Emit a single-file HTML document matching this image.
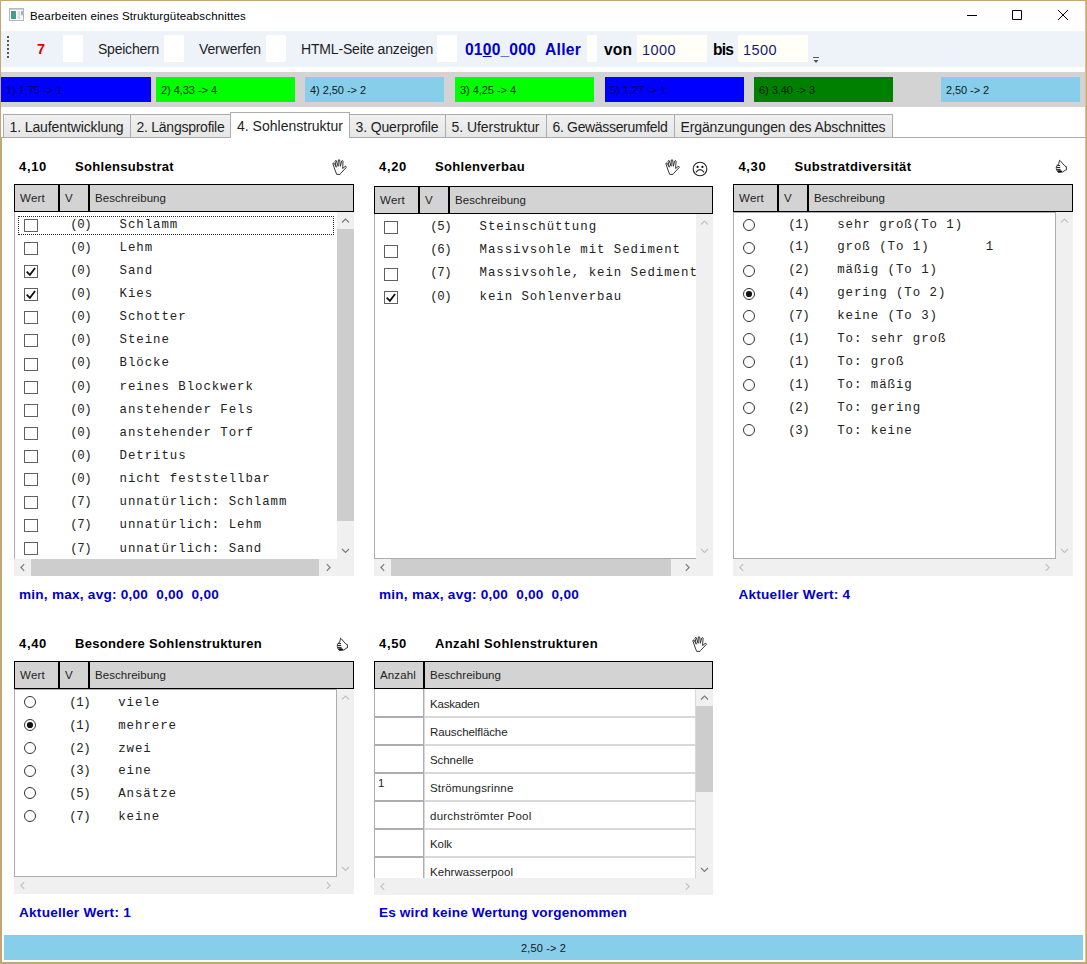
<!DOCTYPE html>
<html lang="de"><head><meta charset="utf-8"><title>Bearbeiten eines Strukturgüteabschnittes</title>
<style>
html,body{margin:0;padding:0;}
body{width:1087px;height:964px;overflow:hidden;background:#fff;position:relative;font-family:"Liberation Sans", sans-serif;}
.a{position:absolute;box-sizing:border-box;}
.t{position:absolute;white-space:pre;line-height:20px;font-family:"Liberation Sans", sans-serif;color:#000;}
.b{font-weight:bold;}
.m{font-family:"Liberation Mono", monospace;}
.ms{letter-spacing:0.96px;}
.mv{letter-spacing:-0.4px;}
svg{position:absolute;overflow:visible;}
</style></head>
<body>
<div class="a" style="left:0px;top:0px;width:1087px;height:1px;background:#C4A674;"></div>
<div class="a" style="left:0px;top:0px;width:1px;height:964px;background:#C4A674;"></div>
<div class="a" style="left:1px;top:138px;width:1px;height:824px;background:#C4A674;"></div>
<div class="a" style="left:1085px;top:0px;width:2px;height:964px;background:#CCA568;"></div>
<div class="a" style="left:1085px;top:1px;width:1px;height:961px;background:#DCC091;"></div>
<div class="a" style="left:0px;top:962px;width:1087px;height:2px;background:#C4A674;"></div>
<svg style="left:9px;top:8px" width="16" height="14" viewBox="0 0 16 14"><defs><linearGradient id="ig" x1="0" y1="0" x2="1" y2="1"><stop offset="0" stop-color="#5C7FA8"/><stop offset="0.55" stop-color="#46A088"/><stop offset="1" stop-color="#3E9A80"/></linearGradient></defs><rect x="0.5" y="0.5" width="14" height="12" fill="#F7F9FA" stroke="#B3B8C2"/><rect x="1" y="1" width="13" height="1" fill="#CDD1D8"/><rect x="2" y="3" width="5" height="8" fill="url(#ig)"/><rect x="8.6" y="3" width="2.6" height="8" fill="#DEDCDC"/><rect x="12" y="3" width="2" height="4.4" fill="#9DBDB4"/></svg>
<span id="t1" class="t" style="left:30px;top:5.52px;font-size:11.5px;letter-spacing:0.142px;">Bearbeiten eines Strukturgüteabschnittes</span>
<svg style="left:960px;top:5px" width="120" height="22" viewBox="0 0 120 22"><path d="M7 10.5H17 M52.5 5.5H61.5V14.5H52.5Z M98 5L108 15 M108 5L98 15" fill="none" stroke="#000" stroke-width="1"/></svg>
<div class="a" style="left:1px;top:31px;width:1084px;height:36px;background:#EEF3FA;"></div>
<div class="a" style="left:7px;top:36px;width:2px;height:2px;background:#555;"></div>
<div class="a" style="left:7px;top:40px;width:2px;height:2px;background:#555;"></div>
<div class="a" style="left:7px;top:44px;width:2px;height:2px;background:#555;"></div>
<div class="a" style="left:7px;top:48px;width:2px;height:2px;background:#555;"></div>
<div class="a" style="left:7px;top:52px;width:2px;height:2px;background:#555;"></div>
<div class="a" style="left:7px;top:56px;width:2px;height:2px;background:#555;"></div>
<span id="t2" class="t b" style="left:37px;top:39.48px;font-size:14.5px;color:#E00000;letter-spacing:0.922px;">7</span>
<div class="a" style="left:63px;top:35px;width:20px;height:27px;background:#fff;"></div>
<div class="a" style="left:164px;top:35px;width:20px;height:27px;background:#fff;"></div>
<div class="a" style="left:266px;top:35px;width:20px;height:27px;background:#fff;"></div>
<div class="a" style="left:437px;top:35px;width:20px;height:27px;background:#fff;"></div>
<div class="a" style="left:587px;top:35px;width:10px;height:27px;background:#fff;"></div>
<span id="t3" class="t" style="left:98px;top:38.75px;font-size:14px;color:#1E1E1E;letter-spacing:-0.227px;">Speichern</span>
<span id="t4" class="t" style="left:199px;top:38.75px;font-size:14px;color:#1E1E1E;letter-spacing:-0.116px;">Verwerfen</span>
<span id="t5" class="t" style="left:301px;top:38.75px;font-size:14px;color:#1E1E1E;letter-spacing:-0.179px;">HTML-Seite anzeigen</span>
<span id="t6" class="t b" style="left:465px;top:39.99px;font-size:15.6px;color:#0000CD;letter-spacing:0.197px;">01<u>0</u>0_000</span>
<span id="t7" class="t b" style="left:545px;top:39.99px;font-size:15.6px;color:#0000CD;letter-spacing:0.266px;">Aller</span>
<span id="t8" class="t b" style="left:604px;top:39.99px;font-size:15.6px;letter-spacing:0.089px;">von</span>
<div class="a" style="left:637px;top:35px;width:70px;height:27px;background:#FFFFF8;"></div>
<span id="t9" class="t" style="left:642px;top:39.98px;font-size:14.5px;color:#191970;letter-spacing:0.434px;">1000</span>
<span id="t10" class="t b" style="left:713px;top:39.99px;font-size:15.6px;letter-spacing:-0.844px;">bis</span>
<div class="a" style="left:738px;top:35px;width:70px;height:27px;background:#FFFFF8;"></div>
<span id="t11" class="t" style="left:743px;top:39.98px;font-size:14.5px;color:#191970;letter-spacing:0.434px;">1500</span>
<svg style="left:812px;top:56px" width="8" height="8" viewBox="0 0 8 8"><path d="M1 1.5H7" stroke="#555" stroke-width="1"/><path d="M1.5 4H6.5L4 7Z" fill="#555"/></svg>
<div class="a" style="left:1px;top:72px;width:1084px;height:35px;background:#D3D3D3;"></div>
<div class="a" style="left:1px;top:77px;width:150px;height:25px;background:#0000FF;"></div>
<span id="t12" class="t" style="left:6px;top:80.19px;font-size:11px;color:#000058;letter-spacing:-0.048px;">1) 1,75 -> 1</span>
<div class="a" style="left:156px;top:77px;width:139px;height:25px;background:#00FF00;"></div>
<span id="t13" class="t" style="left:161px;top:80.19px;font-size:11px;color:#002A00;letter-spacing:-0.048px;">2) 4,33 -> 4</span>
<div class="a" style="left:305px;top:77px;width:139px;height:25px;background:#87CEEB;"></div>
<span id="t14" class="t" style="left:310px;top:80.19px;font-size:11px;color:#10181C;letter-spacing:-0.048px;">4) 2,50 -> 2</span>
<div class="a" style="left:455px;top:77px;width:139px;height:25px;background:#00FF00;"></div>
<span id="t15" class="t" style="left:460px;top:80.19px;font-size:11px;color:#002A00;letter-spacing:-0.048px;">3) 4,25 -> 4</span>
<div class="a" style="left:605px;top:77px;width:139px;height:25px;background:#0000FF;"></div>
<span id="t16" class="t" style="left:610px;top:80.19px;font-size:11px;color:#000058;letter-spacing:-0.048px;">5) 1,27 -> 1</span>
<div class="a" style="left:754px;top:77px;width:139px;height:25px;background:#008000;"></div>
<span id="t17" class="t" style="left:759px;top:80.19px;font-size:11px;color:#001800;letter-spacing:-0.048px;">6) 3,40 -> 3</span>
<div class="a" style="left:941px;top:77px;width:139px;height:25px;background:#87CEEB;"></div>
<span id="t18" class="t" style="left:946px;top:80.19px;font-size:11px;color:#10181C;letter-spacing:-0.082px;">2,50 -> 2</span>
<div class="a" style="left:1px;top:137px;width:1084px;height:1px;background:#ACACAC;"></div>
<div class="a" style="left:3px;top:114px;width:128px;height:24px;background:linear-gradient(#F1F1F1,#E6E6E6);border:1px solid #ACACAC;"></div>
<span id="t19" class="t" style="left:9.5px;top:116.65px;font-size:14px;color:#1E1E1E;letter-spacing:-0.109px;">1. Laufentwicklung</span>
<div class="a" style="left:130px;top:114px;width:102px;height:24px;background:linear-gradient(#F1F1F1,#E6E6E6);border:1px solid #ACACAC;"></div>
<span id="t20" class="t" style="left:136.5px;top:116.65px;font-size:14px;color:#1E1E1E;letter-spacing:-0.256px;">2. Längsprofile</span>
<div class="a" style="left:349px;top:114px;width:97px;height:24px;background:linear-gradient(#F1F1F1,#E6E6E6);border:1px solid #ACACAC;"></div>
<span id="t21" class="t" style="left:355.5px;top:116.65px;font-size:14px;color:#1E1E1E;letter-spacing:-0.131px;">3. Querprofile</span>
<div class="a" style="left:445px;top:114px;width:102px;height:24px;background:linear-gradient(#F1F1F1,#E6E6E6);border:1px solid #ACACAC;"></div>
<span id="t22" class="t" style="left:451.5px;top:116.65px;font-size:14px;color:#1E1E1E;letter-spacing:-0.047px;">5. Uferstruktur</span>
<div class="a" style="left:546px;top:114px;width:129px;height:24px;background:linear-gradient(#F1F1F1,#E6E6E6);border:1px solid #ACACAC;"></div>
<span id="t23" class="t" style="left:552.5px;top:116.65px;font-size:14px;color:#1E1E1E;letter-spacing:-0.330px;">6. Gewässerumfeld</span>
<div class="a" style="left:674px;top:114px;width:219px;height:24px;background:linear-gradient(#F1F1F1,#E6E6E6);border:1px solid #ACACAC;"></div>
<span id="t24" class="t" style="left:680.5px;top:116.65px;font-size:14px;color:#1E1E1E;letter-spacing:-0.120px;">Ergänzungungen des Abschnittes</span>
<div class="a" style="left:230px;top:112px;width:120px;height:26px;background:#fff;border:1px solid #ACACAC;border-bottom:none;"></div>
<span id="t25" class="t" style="left:237px;top:115.65px;font-size:14px;color:#1E1E1E;letter-spacing:0.009px;">4. Sohlenstruktur</span>
<span id="t26" class="t b" style="left:19px;top:157.00px;font-size:13px;letter-spacing:0.672px;">4,10</span>
<span id="t27" class="t b" style="left:75px;top:157.00px;font-size:13px;letter-spacing:0.312px;">Sohlensubstrat</span>
<svg style="left:332px;top:159px" width="15" height="16" viewBox="0 0 15 16"><path d="M4.7 15.4 L3.0 11.0 L0.9 4.8 Q0.9 3.5 2.0 4.1 L4.3 8.2 L3.0 2.3 Q3.3 1.1 4.3 1.7 L6.1 7.3 L6.3 1.0 Q7.0 0.0 7.7 1.0 L8.3 7.3 L9.8 1.9 Q10.6 1.0 11.1 2.1 L10.6 9.5 L13.2 7.4 Q14.5 7.2 14.2 8.5 L8.5 14.6 L8.0 15.4 Z" fill="#fff" stroke="#222" stroke-width="0.9" stroke-linejoin="round"/></svg>
<div class="a" style="left:14px;top:184px;width:45px;height:28px;background:#D3D3D3;border:1px solid #000;"></div>
<span id="t28" class="t" style="left:20px;top:188.02px;font-size:11.5px;color:#1E1E1E;letter-spacing:0.230px;">Wert</span>
<div class="a" style="left:59px;top:184px;width:30px;height:28px;background:#D3D3D3;border:1px solid #000;"></div>
<span id="t29" class="t" style="left:65px;top:188.02px;font-size:11.5px;color:#1E1E1E;letter-spacing:0.328px;">V</span>
<div class="a" style="left:89px;top:184px;width:265px;height:28px;background:#D3D3D3;border:1px solid #000;"></div>
<span id="t30" class="t" style="left:95px;top:188.02px;font-size:11.5px;color:#1E1E1E;letter-spacing:0.056px;">Beschreibung</span>
<div class="a" style="left:14px;top:212px;width:1px;height:347px;background:#ABADB3;"></div>
<div class="a" style="left:337px;top:212px;width:17px;height:347px;background:#F0F0F0;"></div>
<svg style="left:337px;top:212px" width="17" height="17" viewBox="0 0 17 17"><path d="M5 10.5L8.5 7L12 10.5" fill="none" stroke="#7A7A7A" stroke-width="1.15"/></svg>
<svg style="left:337px;top:542px" width="17" height="17" viewBox="0 0 17 17"><path d="M5 7L8.5 10.5L12 7" fill="none" stroke="#7A7A7A" stroke-width="1.15"/></svg>
<div class="a" style="left:337px;top:229px;width:17px;height:292px;background:#CDCDCD;"></div>
<div class="a" style="left:14px;top:559px;width:323px;height:17px;background:#F0F0F0;"></div>
<svg style="left:14px;top:559px" width="17" height="17" viewBox="0 0 17 17"><path d="M10.2 5.2L6.9 8.5L10.2 11.8" fill="none" stroke="#7A7A7A" stroke-width="1.15"/></svg>
<svg style="left:320px;top:559px" width="17" height="17" viewBox="0 0 17 17"><path d="M6.8 5.2L10.1 8.5L6.8 11.8" fill="none" stroke="#7A7A7A" stroke-width="1.15"/></svg>
<div class="a" style="left:31px;top:559px;width:288px;height:17px;background:#CDCDCD;"></div>
<div class="a" style="left:337px;top:559px;width:17px;height:17px;background:#F0F0F0;"></div>
<div class="a" style="left:18px;top:216px;width:316px;height:19px;border:1px dotted #222;"></div>
<div class="a" style="left:24px;top:219px;width:14px;height:13px;background:#fff;border:1px solid #606060;"></div>
<span id="t31" class="t m mv" style="left:70.3px;top:214.50px;font-size:12.4px;color:#222;">(0)</span>
<span id="t32" class="t m ms" style="left:119.5px;top:214.50px;font-size:12.4px;color:#222;">Schlamm</span>
<div class="a" style="left:24px;top:242px;width:14px;height:13px;background:#fff;border:1px solid #606060;"></div>
<span id="t33" class="t m mv" style="left:70.3px;top:237.65px;font-size:12.4px;color:#222;">(0)</span>
<span id="t34" class="t m ms" style="left:119.5px;top:237.65px;font-size:12.4px;color:#222;">Lehm</span>
<div class="a" style="left:24px;top:265px;width:14px;height:13px;background:#fff;border:1px solid #606060;"></div>
<svg style="left:24px;top:265px" width="14" height="13" viewBox="0 0 14 13"><path d="M2.7 6.6L5.9 9.9L11.1 3.0" fill="none" stroke="#111" stroke-width="1.8"/></svg>
<span id="t35" class="t m mv" style="left:70.3px;top:260.80px;font-size:12.4px;color:#222;">(0)</span>
<span id="t36" class="t m ms" style="left:119.5px;top:260.80px;font-size:12.4px;color:#222;">Sand</span>
<div class="a" style="left:24px;top:288px;width:14px;height:13px;background:#fff;border:1px solid #606060;"></div>
<svg style="left:24px;top:288px" width="14" height="13" viewBox="0 0 14 13"><path d="M2.7 6.6L5.9 9.9L11.1 3.0" fill="none" stroke="#111" stroke-width="1.8"/></svg>
<span id="t37" class="t m mv" style="left:70.3px;top:283.95px;font-size:12.4px;color:#222;">(0)</span>
<span id="t38" class="t m ms" style="left:119.5px;top:283.95px;font-size:12.4px;color:#222;">Kies</span>
<div class="a" style="left:24px;top:311px;width:14px;height:13px;background:#fff;border:1px solid #606060;"></div>
<span id="t39" class="t m mv" style="left:70.3px;top:307.10px;font-size:12.4px;color:#222;">(0)</span>
<span id="t40" class="t m ms" style="left:119.5px;top:307.10px;font-size:12.4px;color:#222;">Schotter</span>
<div class="a" style="left:24px;top:334px;width:14px;height:13px;background:#fff;border:1px solid #606060;"></div>
<span id="t41" class="t m mv" style="left:70.3px;top:330.25px;font-size:12.4px;color:#222;">(0)</span>
<span id="t42" class="t m ms" style="left:119.5px;top:330.25px;font-size:12.4px;color:#222;">Steine</span>
<div class="a" style="left:24px;top:358px;width:14px;height:13px;background:#fff;border:1px solid #606060;"></div>
<span id="t43" class="t m mv" style="left:70.3px;top:353.40px;font-size:12.4px;color:#222;">(0)</span>
<span id="t44" class="t m ms" style="left:119.5px;top:353.40px;font-size:12.4px;color:#222;">Blöcke</span>
<div class="a" style="left:24px;top:381px;width:14px;height:13px;background:#fff;border:1px solid #606060;"></div>
<span id="t45" class="t m mv" style="left:70.3px;top:376.55px;font-size:12.4px;color:#222;">(0)</span>
<span id="t46" class="t m ms" style="left:119.5px;top:376.55px;font-size:12.4px;color:#222;">reines Blockwerk</span>
<div class="a" style="left:24px;top:404px;width:14px;height:13px;background:#fff;border:1px solid #606060;"></div>
<span id="t47" class="t m mv" style="left:70.3px;top:399.70px;font-size:12.4px;color:#222;">(0)</span>
<span id="t48" class="t m ms" style="left:119.5px;top:399.70px;font-size:12.4px;color:#222;">anstehender Fels</span>
<div class="a" style="left:24px;top:427px;width:14px;height:13px;background:#fff;border:1px solid #606060;"></div>
<span id="t49" class="t m mv" style="left:70.3px;top:422.85px;font-size:12.4px;color:#222;">(0)</span>
<span id="t50" class="t m ms" style="left:119.5px;top:422.85px;font-size:12.4px;color:#222;">anstehender Torf</span>
<div class="a" style="left:24px;top:450px;width:14px;height:13px;background:#fff;border:1px solid #606060;"></div>
<span id="t51" class="t m mv" style="left:70.3px;top:446.00px;font-size:12.4px;color:#222;">(0)</span>
<span id="t52" class="t m ms" style="left:119.5px;top:446.00px;font-size:12.4px;color:#222;">Detritus</span>
<div class="a" style="left:24px;top:473px;width:14px;height:13px;background:#fff;border:1px solid #606060;"></div>
<span id="t53" class="t m mv" style="left:70.3px;top:469.15px;font-size:12.4px;color:#222;">(0)</span>
<span id="t54" class="t m ms" style="left:119.5px;top:469.15px;font-size:12.4px;color:#222;">nicht feststellbar</span>
<div class="a" style="left:24px;top:496px;width:14px;height:13px;background:#fff;border:1px solid #606060;"></div>
<span id="t55" class="t m mv" style="left:70.3px;top:492.30px;font-size:12.4px;color:#222;">(7)</span>
<span id="t56" class="t m ms" style="left:119.5px;top:492.30px;font-size:12.4px;color:#222;">unnatürlich: Schlamm</span>
<div class="a" style="left:24px;top:519px;width:14px;height:13px;background:#fff;border:1px solid #606060;"></div>
<span id="t57" class="t m mv" style="left:70.3px;top:515.45px;font-size:12.4px;color:#222;">(7)</span>
<span id="t58" class="t m ms" style="left:119.5px;top:515.45px;font-size:12.4px;color:#222;">unnatürlich: Lehm</span>
<div class="a" style="left:24px;top:542px;width:14px;height:13px;background:#fff;border:1px solid #606060;"></div>
<span id="t59" class="t m mv" style="left:70.3px;top:538.60px;font-size:12.4px;color:#222;">(7)</span>
<span id="t60" class="t m ms" style="left:119.5px;top:538.60px;font-size:12.4px;color:#222;">unnatürlich: Sand</span>
<span id="t61" class="t b" style="left:19px;top:584.69px;font-size:13.6px;color:#0000CD;letter-spacing:0.235px;">min, max, avg: 0,00  0,00  0,00</span>
<span id="t62" class="t b" style="left:379px;top:157.00px;font-size:13px;letter-spacing:0.672px;">4,20</span>
<span id="t63" class="t b" style="left:435px;top:157.00px;font-size:13px;letter-spacing:0.336px;">Sohlenverbau</span>
<svg style="left:665px;top:159px" width="15" height="16" viewBox="0 0 15 16"><path d="M4.7 15.4 L3.0 11.0 L0.9 4.8 Q0.9 3.5 2.0 4.1 L4.3 8.2 L3.0 2.3 Q3.3 1.1 4.3 1.7 L6.1 7.3 L6.3 1.0 Q7.0 0.0 7.7 1.0 L8.3 7.3 L9.8 1.9 Q10.6 1.0 11.1 2.1 L10.6 9.5 L13.2 7.4 Q14.5 7.2 14.2 8.5 L8.5 14.6 L8.0 15.4 Z" fill="#fff" stroke="#222" stroke-width="0.9" stroke-linejoin="round"/></svg>
<svg style="left:692px;top:161px" width="16" height="16" viewBox="0 0 16 16"><circle cx="8" cy="8" r="6.8" fill="#fff" stroke="#222" stroke-width="1.1"/><circle cx="5.6" cy="5.9" r="1.15" fill="#111"/><circle cx="10.4" cy="5.9" r="1.15" fill="#111"/><path d="M3.9 11.3Q8 5.9 12.1 11.3" fill="none" stroke="#222" stroke-width="1.1"/></svg>
<div class="a" style="left:374px;top:186px;width:45px;height:28px;background:#D3D3D3;border:1px solid #000;"></div>
<span id="t64" class="t" style="left:380px;top:190.02px;font-size:11.5px;color:#1E1E1E;letter-spacing:0.230px;">Wert</span>
<div class="a" style="left:419px;top:186px;width:30px;height:28px;background:#D3D3D3;border:1px solid #000;"></div>
<span id="t65" class="t" style="left:425px;top:190.02px;font-size:11.5px;color:#1E1E1E;letter-spacing:0.328px;">V</span>
<div class="a" style="left:449px;top:186px;width:264px;height:28px;background:#D3D3D3;border:1px solid #000;"></div>
<span id="t66" class="t" style="left:455px;top:190.02px;font-size:11.5px;color:#1E1E1E;letter-spacing:0.056px;">Beschreibung</span>
<div class="a" style="left:374px;top:214px;width:1px;height:345px;background:#ABADB3;"></div>
<div class="a" style="left:374px;top:558px;width:322px;height:1px;background:#ABADB3;"></div>
<div class="a" style="left:696px;top:214px;width:17px;height:345px;background:#F0F0F0;"></div>
<svg style="left:696px;top:214px" width="17" height="17" viewBox="0 0 17 17"><path d="M5 10.5L8.5 7L12 10.5" fill="none" stroke="#C2C2C2" stroke-width="1.15"/></svg>
<svg style="left:696px;top:542px" width="17" height="17" viewBox="0 0 17 17"><path d="M5 7L8.5 10.5L12 7" fill="none" stroke="#C2C2C2" stroke-width="1.15"/></svg>
<div class="a" style="left:374px;top:559px;width:322px;height:17px;background:#F0F0F0;"></div>
<svg style="left:374px;top:559px" width="17" height="17" viewBox="0 0 17 17"><path d="M10.2 5.2L6.9 8.5L10.2 11.8" fill="none" stroke="#7A7A7A" stroke-width="1.15"/></svg>
<svg style="left:679px;top:559px" width="17" height="17" viewBox="0 0 17 17"><path d="M6.8 5.2L10.1 8.5L6.8 11.8" fill="none" stroke="#7A7A7A" stroke-width="1.15"/></svg>
<div class="a" style="left:391px;top:559px;width:280px;height:17px;background:#CDCDCD;"></div>
<div class="a" style="left:696px;top:559px;width:17px;height:17px;background:#F0F0F0;"></div>
<div class="a" style="left:384px;top:221px;width:14px;height:13px;background:#fff;border:1px solid #606060;"></div>
<span id="t67" class="t m mv" style="left:430.3px;top:216.90px;font-size:12.4px;color:#222;">(5)</span>
<span id="t68" class="t m ms" style="left:479.5px;top:216.90px;font-size:12.4px;color:#222;">Steinschüttung</span>
<div class="a" style="left:384px;top:245px;width:14px;height:13px;background:#fff;border:1px solid #606060;"></div>
<span id="t69" class="t m mv" style="left:430.3px;top:240.15px;font-size:12.4px;color:#222;">(6)</span>
<span id="t70" class="t m ms" style="left:479.5px;top:240.15px;font-size:12.4px;color:#222;">Massivsohle mit Sediment</span>
<div class="a" style="left:384px;top:268px;width:14px;height:13px;background:#fff;border:1px solid #606060;"></div>
<span id="t71" class="t m mv" style="left:430.3px;top:263.40px;font-size:12.4px;color:#222;">(7)</span>
<span id="t72" class="t m ms" style="left:479.5px;top:263.40px;font-size:12.4px;color:#222;">Massivsohle, kein Sediment</span>
<div class="a" style="left:384px;top:291px;width:14px;height:13px;background:#fff;border:1px solid #606060;"></div>
<svg style="left:384px;top:291px" width="14" height="13" viewBox="0 0 14 13"><path d="M2.7 6.6L5.9 9.9L11.1 3.0" fill="none" stroke="#111" stroke-width="1.8"/></svg>
<span id="t73" class="t m mv" style="left:430.3px;top:286.65px;font-size:12.4px;color:#222;">(0)</span>
<span id="t74" class="t m ms" style="left:479.5px;top:286.65px;font-size:12.4px;color:#222;">kein Sohlenverbau</span>
<span id="t75" class="t b" style="left:379px;top:584.69px;font-size:13.6px;color:#0000CD;letter-spacing:0.235px;">min, max, avg: 0,00  0,00  0,00</span>
<span id="t76" class="t b" style="left:738.4px;top:157.00px;font-size:13px;letter-spacing:0.672px;">4,30</span>
<span id="t77" class="t b" style="left:794.4px;top:157.00px;font-size:13px;letter-spacing:0.359px;">Substratdiversität</span>
<svg style="left:1055px;top:159px" width="13" height="15" viewBox="0 0 13 15"><path d="M4.5 1.2 L3.7 5.4 L2.2 6.2 Q1 7.6 1.3 9.6 Q1.6 12 3.4 13.4 L7.6 13 L10.4 11.2 L11.4 11 L11.4 7.6 L10 7.2 L5.3 1.8 Z" fill="#fff" stroke="#222" stroke-width="0.9" stroke-linejoin="round"/><path d="M2 6.6H5 M1.6 8.5H5.2 M2 10.4H5.6" fill="none" stroke="#222" stroke-width="1"/><path d="M2.2 11.2 L6.2 11.2 L7.4 13 L3.6 13.6 Z" fill="#111"/></svg>
<div class="a" style="left:733px;top:184px;width:45px;height:28px;background:#D3D3D3;border:1px solid #000;"></div>
<span id="t78" class="t" style="left:739px;top:188.02px;font-size:11.5px;color:#1E1E1E;letter-spacing:0.230px;">Wert</span>
<div class="a" style="left:778px;top:184px;width:30px;height:28px;background:#D3D3D3;border:1px solid #000;"></div>
<span id="t79" class="t" style="left:784px;top:188.02px;font-size:11.5px;color:#1E1E1E;letter-spacing:0.328px;">V</span>
<div class="a" style="left:808px;top:184px;width:265px;height:28px;background:#D3D3D3;border:1px solid #000;"></div>
<span id="t80" class="t" style="left:814px;top:188.02px;font-size:11.5px;color:#1E1E1E;letter-spacing:0.056px;">Beschreibung</span>
<div class="a" style="left:733px;top:212px;width:323px;height:347px;border:1px solid #ABADB3;"></div>
<div class="a" style="left:1056px;top:212px;width:17px;height:347px;background:#F0F0F0;"></div>
<svg style="left:1056px;top:212px" width="17" height="17" viewBox="0 0 17 17"><path d="M5 10.5L8.5 7L12 10.5" fill="none" stroke="#C2C2C2" stroke-width="1.15"/></svg>
<svg style="left:1056px;top:542px" width="17" height="17" viewBox="0 0 17 17"><path d="M5 7L8.5 10.5L12 7" fill="none" stroke="#C2C2C2" stroke-width="1.15"/></svg>
<div class="a" style="left:733px;top:559px;width:323px;height:17px;background:#F0F0F0;"></div>
<svg style="left:733px;top:559px" width="17" height="17" viewBox="0 0 17 17"><path d="M10.2 5.2L6.9 8.5L10.2 11.8" fill="none" stroke="#C2C2C2" stroke-width="1.15"/></svg>
<svg style="left:1039px;top:559px" width="17" height="17" viewBox="0 0 17 17"><path d="M6.8 5.2L10.1 8.5L6.8 11.8" fill="none" stroke="#C2C2C2" stroke-width="1.15"/></svg>
<div class="a" style="left:1056px;top:559px;width:17px;height:17px;background:#F0F0F0;"></div>
<svg style="left:742px;top:218.0px" width="14" height="14" viewBox="0 0 14 14"><circle cx="7" cy="7" r="5.5" fill="#fff" stroke="#333" stroke-width="1"/></svg>
<span id="t81" class="t m mv" style="left:788.3px;top:214.50px;font-size:12.4px;color:#222;">(1)</span>
<span id="t82" class="t m ms" style="left:837.2px;top:214.50px;font-size:12.4px;color:#222;">sehr groß(To 1)</span>
<svg style="left:742px;top:241.0px" width="14" height="14" viewBox="0 0 14 14"><circle cx="7" cy="7" r="5.5" fill="#fff" stroke="#333" stroke-width="1"/></svg>
<span id="t83" class="t m mv" style="left:788.3px;top:237.40px;font-size:12.4px;color:#222;">(1)</span>
<span id="t84" class="t m ms" style="left:837.2px;top:237.40px;font-size:12.4px;color:#222;">groß (To 1)       <span style="margin-left:-2.6px">1</span></span>
<svg style="left:742px;top:263.5px" width="14" height="14" viewBox="0 0 14 14"><circle cx="7" cy="7" r="5.5" fill="#fff" stroke="#333" stroke-width="1"/></svg>
<span id="t85" class="t m mv" style="left:788.3px;top:260.30px;font-size:12.4px;color:#222;">(2)</span>
<span id="t86" class="t m ms" style="left:837.2px;top:260.30px;font-size:12.4px;color:#222;">mäßig (To 1)</span>
<svg style="left:742px;top:286.5px" width="14" height="14" viewBox="0 0 14 14"><circle cx="7" cy="7" r="5.5" fill="#fff" stroke="#333" stroke-width="1"/><circle cx="7" cy="7" r="3.1" fill="#111"/></svg>
<span id="t87" class="t m mv" style="left:788.3px;top:283.20px;font-size:12.4px;color:#222;">(4)</span>
<span id="t88" class="t m ms" style="left:837.2px;top:283.20px;font-size:12.4px;color:#222;">gering (To 2)</span>
<svg style="left:742px;top:309.0px" width="14" height="14" viewBox="0 0 14 14"><circle cx="7" cy="7" r="5.5" fill="#fff" stroke="#333" stroke-width="1"/></svg>
<span id="t89" class="t m mv" style="left:788.3px;top:306.10px;font-size:12.4px;color:#222;">(7)</span>
<span id="t90" class="t m ms" style="left:837.2px;top:306.10px;font-size:12.4px;color:#222;">keine (To 3)</span>
<svg style="left:742px;top:332.0px" width="14" height="14" viewBox="0 0 14 14"><circle cx="7" cy="7" r="5.5" fill="#fff" stroke="#333" stroke-width="1"/></svg>
<span id="t91" class="t m mv" style="left:788.3px;top:329.00px;font-size:12.4px;color:#222;">(1)</span>
<span id="t92" class="t m ms" style="left:837.2px;top:329.00px;font-size:12.4px;color:#222;">To: sehr groß</span>
<svg style="left:742px;top:355.0px" width="14" height="14" viewBox="0 0 14 14"><circle cx="7" cy="7" r="5.5" fill="#fff" stroke="#333" stroke-width="1"/></svg>
<span id="t93" class="t m mv" style="left:788.3px;top:351.90px;font-size:12.4px;color:#222;">(1)</span>
<span id="t94" class="t m ms" style="left:837.2px;top:351.90px;font-size:12.4px;color:#222;">To: groß</span>
<svg style="left:742px;top:377.5px" width="14" height="14" viewBox="0 0 14 14"><circle cx="7" cy="7" r="5.5" fill="#fff" stroke="#333" stroke-width="1"/></svg>
<span id="t95" class="t m mv" style="left:788.3px;top:374.80px;font-size:12.4px;color:#222;">(1)</span>
<span id="t96" class="t m ms" style="left:837.2px;top:374.80px;font-size:12.4px;color:#222;">To: mäßig</span>
<svg style="left:742px;top:400.5px" width="14" height="14" viewBox="0 0 14 14"><circle cx="7" cy="7" r="5.5" fill="#fff" stroke="#333" stroke-width="1"/></svg>
<span id="t97" class="t m mv" style="left:788.3px;top:397.70px;font-size:12.4px;color:#222;">(2)</span>
<span id="t98" class="t m ms" style="left:837.2px;top:397.70px;font-size:12.4px;color:#222;">To: gering</span>
<svg style="left:742px;top:423.0px" width="14" height="14" viewBox="0 0 14 14"><circle cx="7" cy="7" r="5.5" fill="#fff" stroke="#333" stroke-width="1"/></svg>
<span id="t99" class="t m mv" style="left:788.3px;top:420.60px;font-size:12.4px;color:#222;">(3)</span>
<span id="t100" class="t m ms" style="left:837.2px;top:420.60px;font-size:12.4px;color:#222;">To: keine</span>
<span id="t101" class="t b" style="left:738.4px;top:584.69px;font-size:13.6px;color:#0000CD;letter-spacing:0.248px;">Aktueller Wert: 4</span>
<span id="t102" class="t b" style="left:19px;top:634.00px;font-size:13px;letter-spacing:0.672px;">4,40</span>
<span id="t103" class="t b" style="left:75px;top:634.00px;font-size:13px;letter-spacing:0.329px;">Besondere Sohlenstrukturen</span>
<svg style="left:336px;top:637px" width="13" height="15" viewBox="0 0 13 15"><path d="M4.5 1.2 L3.7 5.4 L2.2 6.2 Q1 7.6 1.3 9.6 Q1.6 12 3.4 13.4 L7.6 13 L10.4 11.2 L11.4 11 L11.4 7.6 L10 7.2 L5.3 1.8 Z" fill="#fff" stroke="#222" stroke-width="0.9" stroke-linejoin="round"/><path d="M2 6.6H5 M1.6 8.5H5.2 M2 10.4H5.6" fill="none" stroke="#222" stroke-width="1"/><path d="M2.2 11.2 L6.2 11.2 L7.4 13 L3.6 13.6 Z" fill="#111"/></svg>
<div class="a" style="left:14px;top:661px;width:45px;height:28px;background:#D3D3D3;border:1px solid #000;"></div>
<span id="t104" class="t" style="left:20px;top:665.02px;font-size:11.5px;color:#1E1E1E;letter-spacing:0.230px;">Wert</span>
<div class="a" style="left:59px;top:661px;width:30px;height:28px;background:#D3D3D3;border:1px solid #000;"></div>
<span id="t105" class="t" style="left:65px;top:665.02px;font-size:11.5px;color:#1E1E1E;letter-spacing:0.328px;">V</span>
<div class="a" style="left:89px;top:661px;width:265px;height:28px;background:#D3D3D3;border:1px solid #000;"></div>
<span id="t106" class="t" style="left:95px;top:665.02px;font-size:11.5px;color:#1E1E1E;letter-spacing:0.056px;">Beschreibung</span>
<div class="a" style="left:14px;top:689px;width:323px;height:188px;border:1px solid #ABADB3;"></div>
<div class="a" style="left:337px;top:689px;width:17px;height:188px;background:#F0F0F0;"></div>
<svg style="left:337px;top:689px" width="17" height="17" viewBox="0 0 17 17"><path d="M5 10.5L8.5 7L12 10.5" fill="none" stroke="#C2C2C2" stroke-width="1.15"/></svg>
<svg style="left:337px;top:860px" width="17" height="17" viewBox="0 0 17 17"><path d="M5 7L8.5 10.5L12 7" fill="none" stroke="#C2C2C2" stroke-width="1.15"/></svg>
<div class="a" style="left:14px;top:877px;width:323px;height:17px;background:#F0F0F0;"></div>
<svg style="left:14px;top:877px" width="17" height="17" viewBox="0 0 17 17"><path d="M10.2 5.2L6.9 8.5L10.2 11.8" fill="none" stroke="#C2C2C2" stroke-width="1.15"/></svg>
<svg style="left:320px;top:877px" width="17" height="17" viewBox="0 0 17 17"><path d="M6.8 5.2L10.1 8.5L6.8 11.8" fill="none" stroke="#C2C2C2" stroke-width="1.15"/></svg>
<div class="a" style="left:337px;top:877px;width:17px;height:17px;background:#F0F0F0;"></div>
<svg style="left:22.5px;top:695.0px" width="14" height="14" viewBox="0 0 14 14"><circle cx="7" cy="7" r="5.5" fill="#fff" stroke="#333" stroke-width="1"/></svg>
<span id="t107" class="t m mv" style="left:69.3px;top:692.80px;font-size:12.4px;color:#222;">(1)</span>
<span id="t108" class="t m ms" style="left:118.2px;top:692.80px;font-size:12.4px;color:#222;">viele</span>
<svg style="left:22.5px;top:718.0px" width="14" height="14" viewBox="0 0 14 14"><circle cx="7" cy="7" r="5.5" fill="#fff" stroke="#333" stroke-width="1"/><circle cx="7" cy="7" r="3.1" fill="#111"/></svg>
<span id="t109" class="t m mv" style="left:69.3px;top:715.65px;font-size:12.4px;color:#222;">(1)</span>
<span id="t110" class="t m ms" style="left:118.2px;top:715.65px;font-size:12.4px;color:#222;">mehrere</span>
<svg style="left:22.5px;top:740.5px" width="14" height="14" viewBox="0 0 14 14"><circle cx="7" cy="7" r="5.5" fill="#fff" stroke="#333" stroke-width="1"/></svg>
<span id="t111" class="t m mv" style="left:69.3px;top:738.50px;font-size:12.4px;color:#222;">(2)</span>
<span id="t112" class="t m ms" style="left:118.2px;top:738.50px;font-size:12.4px;color:#222;">zwei</span>
<svg style="left:22.5px;top:763.5px" width="14" height="14" viewBox="0 0 14 14"><circle cx="7" cy="7" r="5.5" fill="#fff" stroke="#333" stroke-width="1"/></svg>
<span id="t113" class="t m mv" style="left:69.3px;top:761.35px;font-size:12.4px;color:#222;">(3)</span>
<span id="t114" class="t m ms" style="left:118.2px;top:761.35px;font-size:12.4px;color:#222;">eine</span>
<svg style="left:22.5px;top:786.0px" width="14" height="14" viewBox="0 0 14 14"><circle cx="7" cy="7" r="5.5" fill="#fff" stroke="#333" stroke-width="1"/></svg>
<span id="t115" class="t m mv" style="left:69.3px;top:784.20px;font-size:12.4px;color:#222;">(5)</span>
<span id="t116" class="t m ms" style="left:118.2px;top:784.20px;font-size:12.4px;color:#222;">Ansätze</span>
<svg style="left:22.5px;top:809.0px" width="14" height="14" viewBox="0 0 14 14"><circle cx="7" cy="7" r="5.5" fill="#fff" stroke="#333" stroke-width="1"/></svg>
<span id="t117" class="t m mv" style="left:69.3px;top:807.05px;font-size:12.4px;color:#222;">(7)</span>
<span id="t118" class="t m ms" style="left:118.2px;top:807.05px;font-size:12.4px;color:#222;">keine</span>
<span id="t119" class="t b" style="left:19px;top:902.69px;font-size:13.6px;color:#0000CD;letter-spacing:0.248px;">Aktueller Wert: 1</span>
<span id="t120" class="t b" style="left:379px;top:634.00px;font-size:13px;letter-spacing:0.672px;">4,50</span>
<span id="t121" class="t b" style="left:435px;top:634.00px;font-size:13px;letter-spacing:0.397px;">Anzahl Sohlenstrukturen</span>
<svg style="left:692px;top:636px" width="15" height="16" viewBox="0 0 15 16"><path d="M4.7 15.4 L3.0 11.0 L0.9 4.8 Q0.9 3.5 2.0 4.1 L4.3 8.2 L3.0 2.3 Q3.3 1.1 4.3 1.7 L6.1 7.3 L6.3 1.0 Q7.0 0.0 7.7 1.0 L8.3 7.3 L9.8 1.9 Q10.6 1.0 11.1 2.1 L10.6 9.5 L13.2 7.4 Q14.5 7.2 14.2 8.5 L8.5 14.6 L8.0 15.4 Z" fill="#fff" stroke="#222" stroke-width="0.9" stroke-linejoin="round"/></svg>
<div class="a" style="left:374px;top:661px;width:50px;height:28px;background:#D3D3D3;border:1px solid #000;"></div>
<span id="t122" class="t" style="left:380px;top:665.02px;font-size:11.5px;color:#1E1E1E;letter-spacing:0.138px;">Anzahl</span>
<div class="a" style="left:424px;top:661px;width:289px;height:28px;background:#D3D3D3;border:1px solid #000;"></div>
<span id="t123" class="t" style="left:430px;top:665.02px;font-size:11.5px;color:#1E1E1E;letter-spacing:0.056px;">Beschreibung</span>
<div class="a" style="left:374px;top:689px;width:1px;height:189px;background:#ABADB3;"></div>
<div class="a" style="left:423px;top:689px;width:1px;height:189px;background:#ABADB3;"></div>
<div class="a" style="left:424px;top:689px;width:1px;height:189px;background:#D8D8D8;"></div>
<div class="a" style="left:695px;top:689px;width:1px;height:189px;background:#D8D8D8;"></div>
<div class="a" style="left:374px;top:716px;width:50px;height:2px;background:#ABADB3;"></div>
<div class="a" style="left:424px;top:716px;width:272px;height:2px;background:#D8D8D8;"></div>
<div class="a" style="left:374px;top:744px;width:50px;height:2px;background:#ABADB3;"></div>
<div class="a" style="left:424px;top:744px;width:272px;height:2px;background:#D8D8D8;"></div>
<div class="a" style="left:374px;top:772px;width:50px;height:2px;background:#ABADB3;"></div>
<div class="a" style="left:424px;top:772px;width:272px;height:2px;background:#D8D8D8;"></div>
<div class="a" style="left:374px;top:800px;width:50px;height:2px;background:#ABADB3;"></div>
<div class="a" style="left:424px;top:800px;width:272px;height:2px;background:#D8D8D8;"></div>
<div class="a" style="left:374px;top:828px;width:50px;height:2px;background:#ABADB3;"></div>
<div class="a" style="left:424px;top:828px;width:272px;height:2px;background:#D8D8D8;"></div>
<div class="a" style="left:374px;top:856px;width:50px;height:2px;background:#ABADB3;"></div>
<div class="a" style="left:424px;top:856px;width:272px;height:2px;background:#D8D8D8;"></div>
<span id="t124" class="t" style="left:430px;top:694.02px;font-size:11.5px;color:#1E1E1E;letter-spacing:-0.207px;">Kaskaden</span>
<span id="t125" class="t" style="left:430px;top:722.02px;font-size:11.5px;color:#1E1E1E;letter-spacing:-0.081px;">Rauschelfläche</span>
<span id="t126" class="t" style="left:430px;top:750.02px;font-size:11.5px;color:#1E1E1E;letter-spacing:-0.078px;">Schnelle</span>
<span id="t127" class="t" style="left:430px;top:778.02px;font-size:11.5px;color:#1E1E1E;letter-spacing:0.165px;">Strömungsrinne</span>
<span id="t128" class="t" style="left:430px;top:806.02px;font-size:11.5px;color:#1E1E1E;letter-spacing:0.241px;">durchströmter Pool</span>
<span id="t129" class="t" style="left:430px;top:834.02px;font-size:11.5px;color:#1E1E1E;letter-spacing:-0.094px;">Kolk</span>
<span id="t130" class="t" style="left:430px;top:862.02px;font-size:11.5px;color:#1E1E1E;letter-spacing:0.038px;">Kehrwasserpool</span>
<span id="t131" class="t" style="left:378px;top:773.02px;font-size:11.5px;color:#1E1E1E;">1</span>
<div class="a" style="left:374px;top:878px;width:340px;height:3px;background:#fff;"></div>
<div class="a" style="left:696px;top:689px;width:17px;height:189px;background:#F0F0F0;"></div>
<svg style="left:696px;top:689px" width="17" height="17" viewBox="0 0 17 17"><path d="M5 10.5L8.5 7L12 10.5" fill="none" stroke="#7A7A7A" stroke-width="1.15"/></svg>
<svg style="left:696px;top:861px" width="17" height="17" viewBox="0 0 17 17"><path d="M5 7L8.5 10.5L12 7" fill="none" stroke="#7A7A7A" stroke-width="1.15"/></svg>
<div class="a" style="left:696px;top:706px;width:17px;height:86px;background:#CDCDCD;"></div>
<div class="a" style="left:374px;top:878px;width:322px;height:17px;background:#F0F0F0;"></div>
<svg style="left:374px;top:878px" width="17" height="17" viewBox="0 0 17 17"><path d="M10.2 5.2L6.9 8.5L10.2 11.8" fill="none" stroke="#C2C2C2" stroke-width="1.15"/></svg>
<svg style="left:679px;top:878px" width="17" height="17" viewBox="0 0 17 17"><path d="M6.8 5.2L10.1 8.5L6.8 11.8" fill="none" stroke="#C2C2C2" stroke-width="1.15"/></svg>
<div class="a" style="left:696px;top:878px;width:17px;height:17px;background:#F0F0F0;"></div>
<span id="t132" class="t b" style="left:379px;top:902.69px;font-size:13.6px;color:#0000CD;letter-spacing:0.152px;">Es wird keine Wertung vorgenommen</span>
<div class="a" style="left:4px;top:935px;width:1079px;height:25px;background:#87CEEB;"></div>
<span id="t133" class="t" style="left:521px;top:937.69px;font-size:11px;color:#10181C;letter-spacing:0.141px;">2,50 -> 2</span>
</body></html>
